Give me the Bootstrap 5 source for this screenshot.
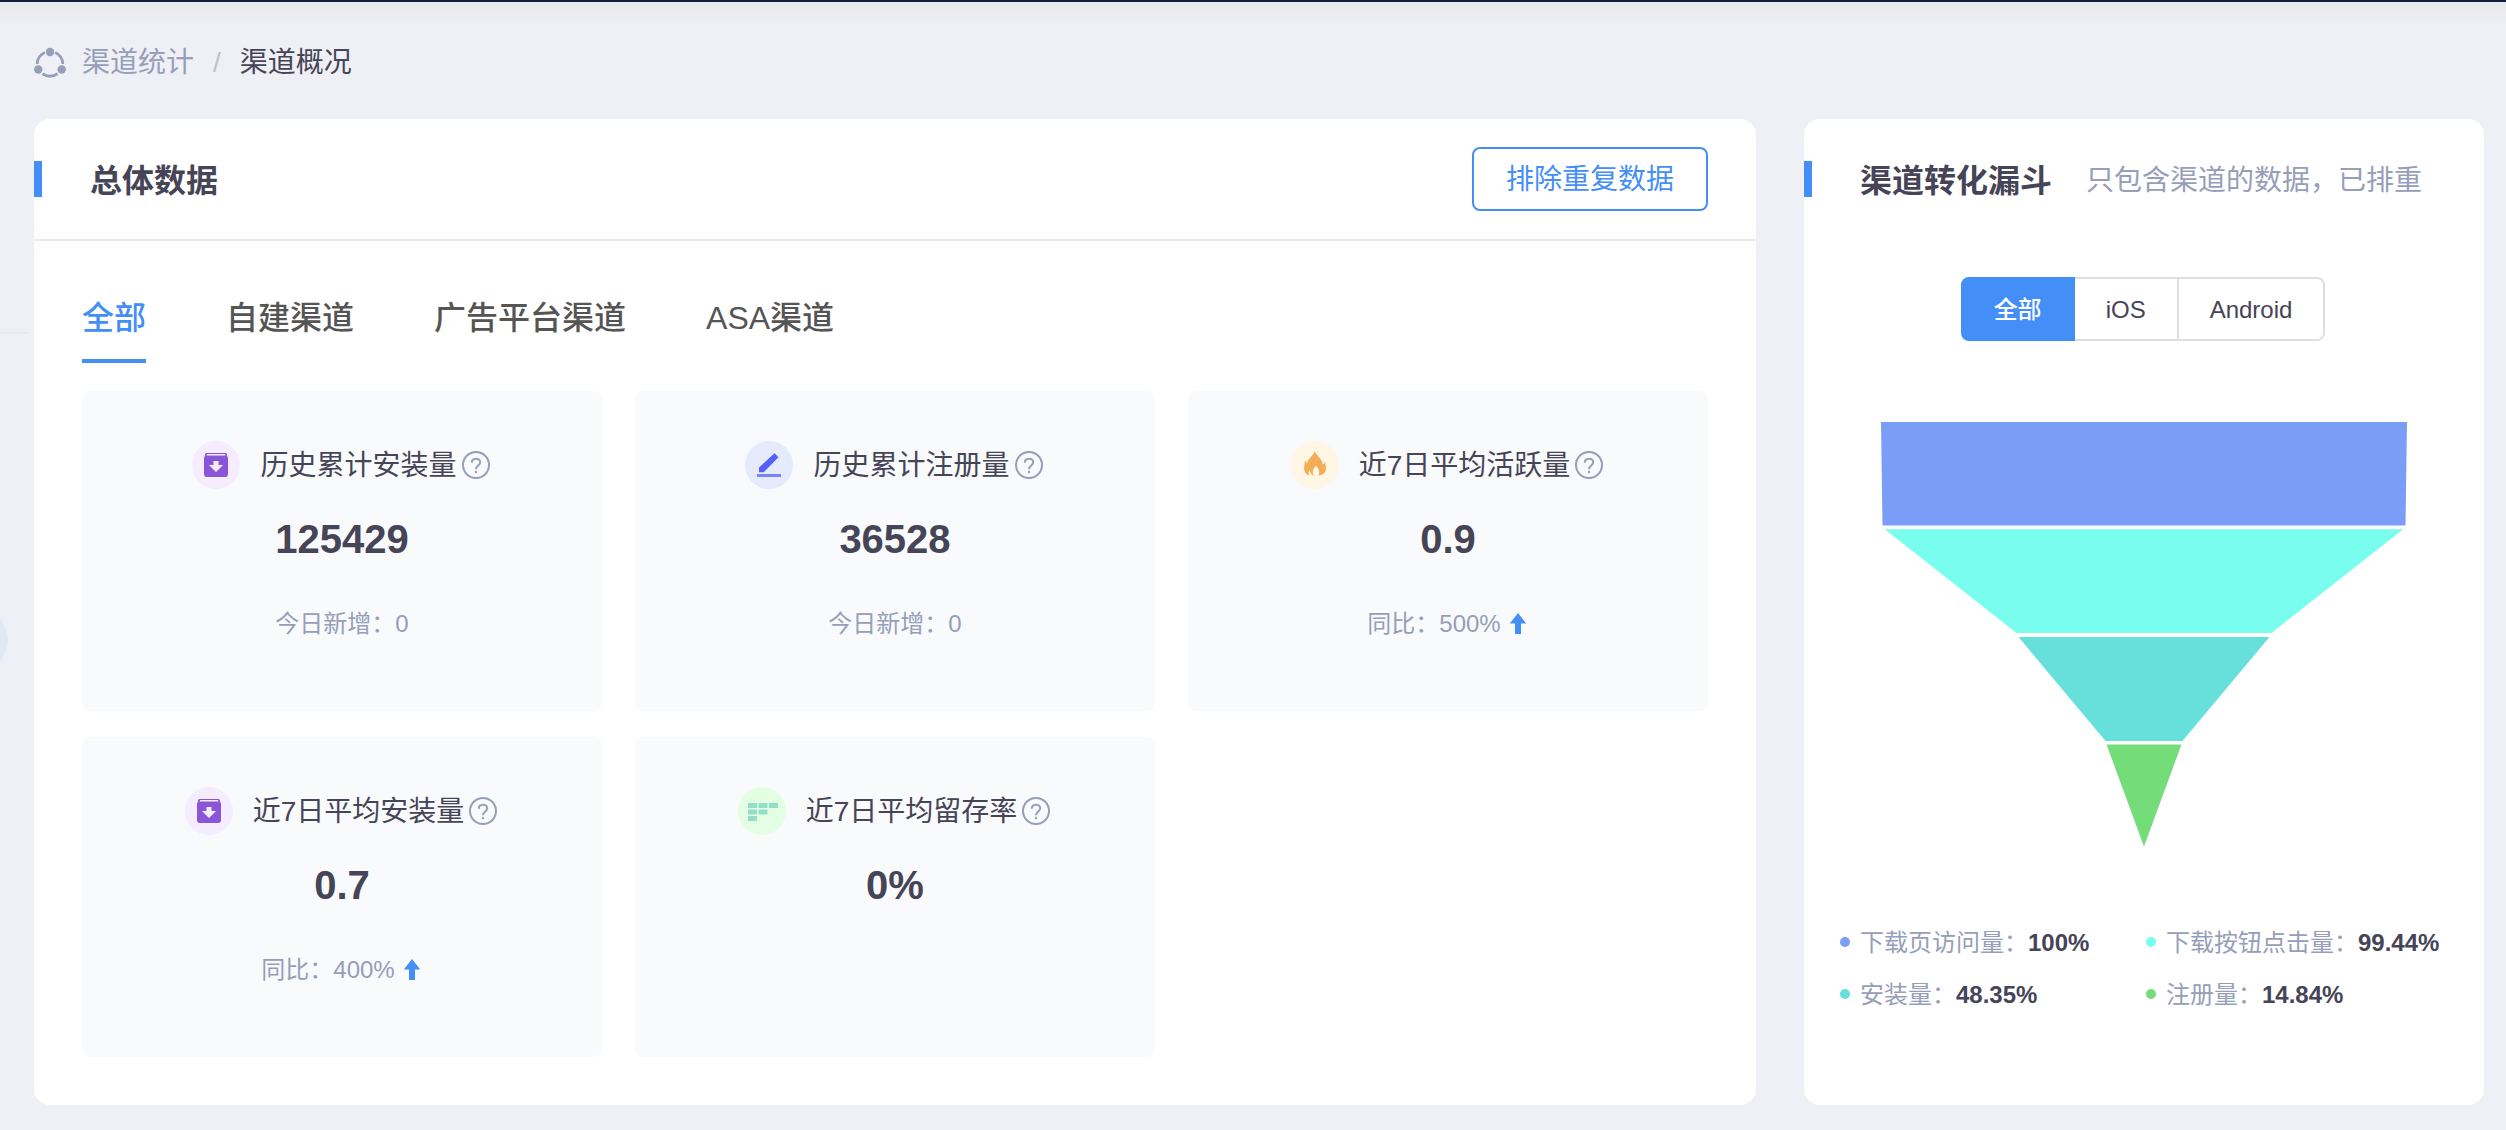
<!DOCTYPE html>
<html lang="zh-CN">
<head>
<meta charset="utf-8">
<meta name="viewport" content="width=device-width, initial-scale=1">
<title>渠道概况</title>
<link href="https://cdn.jsdelivr.net/npm/bootstrap@5.3.0/dist/css/bootstrap.min.css" rel="stylesheet">
<style>
  :root { --ink: #464457; --muted: #969eb9; --accent: #448ef7; }
  body {
    font-family: "Liberation Sans", "Noto Sans CJK SC", sans-serif;
    color: var(--ink); background: #eff0f5; font-size: 24px; line-height: 36px; overflow-x: hidden;
  }
  .topline { height: 2px; background: #151b3d; }
  .page { padding: 0 22px 24px 34px; background: linear-gradient(#e6e8ea, #eff0f5 24px); }
  .crumbs { height: 117px; padding-top: 4px; font-size: 28px; line-height: 40px; }
  .crumbs a { color: var(--muted); }
  .crumbs .sep { color: #c0c2cb; margin: 0 19px; }
  .rail-line { top: 332px; left: 0; width: 30px; height: 2px; background: #e9e9ee; }
  .rail-handle { top: 608px; left: 0; width: 8px; height: 64px; overflow: hidden; }
  .rail-handle::before { content: ""; display: block; width: 64px; height: 64px; margin-left: -56px; border-radius: 50%; background: #e0e7f5; }
  .panels { display: grid; grid-template-columns: minmax(0, 1fr) 680px; gap: 48px; }
  .panel { background: #fff; border-radius: 16px; }
  .panel-head { height: 120px; padding-right: 48px; }
  .panel-head.ruled { height: 122px; border-bottom: 2px solid #e9e9ef; }
  .panel-head::before { content: ""; width: 8px; height: 36px; background: var(--accent); margin-right: 48px; flex: none; }
  .panel-head h2 { font-size: 32px; line-height: 48px; font-weight: 700; padding-top: 3px; }
  .hint { font-size: 28px; line-height: 40px; color: var(--muted); margin-left: 34px; padding-top: 3px; white-space: nowrap; }
  .btn-dedupe { --bs-btn-color: var(--accent); --bs-btn-border-color: var(--accent); --bs-btn-hover-bg: var(--accent); --bs-btn-hover-color: #fff;
    border-width: 2px; border-radius: 8px; padding: 11px 32px 9px; font-size: 28px; line-height: 40px; }
  .panel-body { padding: 52px 48px 48px; }
  .tabs { gap: 80px; margin-bottom: 28px; }
  .tabs .tab { border: 0; border-bottom: 4px solid transparent; background: none; color: #555; padding: 0 0 16px; font-size: 32px; line-height: 50px; font-weight: 500; }
  .tabs .tab.active { color: var(--accent); border-color: var(--accent); }
  .tiles { display: grid; grid-template-columns: repeat(3, minmax(0, 1fr)); gap: 26px 33px; }
  .tile { background: #f8fafc; border-radius: 8px; min-height: 320px; padding-top: 50px; text-align: center; }
  .tile-title { font-size: 28px; line-height: 46px; font-weight: 400; margin: 0; padding-top: 2px; }
  .disc { width: 48px; height: 48px; border-radius: 50%; margin-right: 20px; }
  .disc svg { display: block; }
  .help { border: 0; background: none; padding: 0; margin: 0 2px 0 5px; line-height: 0; color: var(--muted); }
  .figure-num { font-size: 40px; line-height: 48px; font-weight: 700; margin-top: 26px; }
  .figure-sub { color: var(--muted); margin-top: 43px; }
  .arrow { margin: 0 2px 0 8px; }
  .platforms { margin-top: 38px; }
  .platforms .btn { --bs-btn-color: var(--ink); --bs-btn-border-color: #dedee5; --bs-btn-active-bg: var(--accent); --bs-btn-active-border-color: var(--accent); --bs-btn-active-color: #fff;
    border-width: 2px; border-radius: 8px; padding: 13px 31px 11px; font-size: 24px; line-height: 36px; font-weight: 500; }
  .btn-group.platforms > .btn:not(:first-child) { margin-left: -2px; }
  .funnel { display: block; width: 100%; max-width: 526px; margin: 81px auto 0; }
  .legend { display: grid; grid-template-columns: 1fr 1fr; row-gap: 16px; padding: 0 32px 0 36px; margin: 78px 0 0; }
  .legend .item { display: flex; align-items: center; white-space: nowrap; }
  .legend .dot { width: 10px; height: 10px; border-radius: 50%; margin-right: 10px; }
  .legend dt, .legend dd { padding-top: 2px; }
  .legend dt { font-weight: 400; color: var(--muted); }
  .legend dd { font-weight: 700; margin: 0; }
  .c1 { background: #7a9df8; } .c2 { background: #78fdee; } .c3 { background: #67e0dc; } .c4 { background: #74dc78; }
  .legend .item { height: 36px; }
  @media (max-width: 1800px) { .panels { grid-template-columns: minmax(0, 1fr); } }
</style>
</head>
<body class="position-relative">
<svg width="0" height="0" class="position-absolute" aria-hidden="true">
  <symbol id="i-help" viewBox="0 0 28 28">
    <circle cx="14" cy="14" r="13" fill="none" stroke="currentColor" stroke-width="2"/>
    <path d="M9.800 11.800C9.800 6.400 18.200 6.400 18.200 11.300C18.200 14.300 14 14.600 14 18.200" fill="none" stroke="currentColor" stroke-width="2"/>
    <circle cx="14" cy="21" r="1.200" fill="currentColor"/>
  </symbol>
  <symbol id="i-install" viewBox="0 0 48 48">
    <path d="M14.500 12h19q1 0 1.300 1l.4 2H12.800l.4-2q.3-1 1.300-1z" fill="#8a55d6"/><path d="M15.200 13h17.600l.8 1.600H14.400z" fill="#f5edff"/>
    <path d="M12 16.500q0-1.500 1.500-1.500h21q1.500 0 1.500 1.500V33q0 3-3 3H15q-3 0-3-3z" fill="#8a55d6"/>
    <path d="M21.500 20h5v4H31L24 31l-7-7h4.500z" fill="#f5edff"/>
  </symbol>
  <symbol id="i-up" viewBox="0 0 18 22">
    <path d="M9 0l8.200 10.500H12V21H6V10.500H.8z" fill="#448ef7"/>
  </symbol>
</svg>
<div class="topline"></div>
<div class="rail-line position-absolute"></div>
<div class="rail-handle position-absolute"></div>
<div class="page">
  <nav class="crumbs d-flex align-items-center" aria-label="breadcrumb">
    <svg width="32" height="32" viewBox="0 0 32 32" aria-hidden="true" class="me-3">
      <g fill="none" stroke="#969eb9" stroke-width="2.800"><path d="M3.200 17A13 13 0 0 1 10.800 5.600"/><path d="M21.200 5.600A13 13 0 0 1 28.800 17"/><path d="M8.400 26.800A14 14 0 0 0 23.600 26.800"/></g>
      <g fill="#969eb9"><circle cx="16" cy="5" r="4.200"/><circle cx="4.300" cy="22.500" r="4.200"/><circle cx="27.700" cy="22.500" r="4.200"/></g>
    </svg>
    <a href="#" class="text-decoration-none">渠道统计</a><span class="sep">/</span><span aria-current="page">渠道概况</span>
  </nav>
  <main class="panels">
    <section class="panel">
      <div class="panel-head ruled d-flex align-items-center">
        <h2 class="m-0">总体数据</h2>
        <button type="button" class="btn btn-dedupe ms-auto">排除重复数据</button>
      </div>
      <div class="panel-body">
        <div class="tabs d-flex" role="tablist">
          <button type="button" role="tab" aria-selected="true" class="tab active">全部</button>
          <button type="button" role="tab" aria-selected="false" class="tab">自建渠道</button>
          <button type="button" role="tab" aria-selected="false" class="tab">广告平台渠道</button>
          <button type="button" role="tab" aria-selected="false" class="tab">ASA渠道</button>
        </div>
        <div class="tiles">
          <article class="tile">
            <div class="d-flex justify-content-center align-items-center">
              <span class="disc" style="background:#f5edff"><svg width="48" height="48"><use href="#i-install"/></svg></span>
              <h3 class="tile-title">历史累计安装量</h3>
              <button type="button" class="help" aria-label="说明"><svg width="28" height="28"><use href="#i-help"/></svg></button>
            </div>
            <div class="figure-num">125429</div>
            <div class="figure-sub">今日新增：0</div>
          </article>
          <article class="tile">
            <div class="d-flex justify-content-center align-items-center">
              <span class="disc" style="background:#e5eafd"><svg width="48" height="48" viewBox="0 0 48 48"><path d="M12 33h24v3H12z" fill="#7784fa"/><path d="M29.500 12.300l4 4-14.800 14.900H14v-4.700z" fill="#5560f7"/></svg></span>
              <h3 class="tile-title">历史累计注册量</h3>
              <button type="button" class="help" aria-label="说明"><svg width="28" height="28"><use href="#i-help"/></svg></button>
            </div>
            <div class="figure-num">36528</div>
            <div class="figure-sub">今日新增：0</div>
          </article>
          <article class="tile">
            <div class="d-flex justify-content-center align-items-center">
              <span class="disc" style="background:#fff6e5"><svg width="48" height="48" viewBox="0 0 48 48"><path d="M23.800 10c.6 3.400 7.600 7.800 8 13.700 1-.6 1.700-1.400 1.900-3.200 1.200 3 1.600 6 1 9-.7 2.800-3.600 4.800-7.200 5.100 1.700-3.600.4-7-2.500-9.500-3 2.200-4.200 5.700-2.200 9.500-1.600-.4-3.400-1.500-4-5.600-1.400 1.500-1.500 3.400-.6 5.400-2.900-.7-5.200-3-5.100-7.300 0-2.400 1-4.200.4-7 1 .4 2 1.300 2.500 2.500.6-5 6.300-7.400 7.800-12.600z" fill="#f3ad57"/></svg></span>
              <h3 class="tile-title">近7日平均活跃量</h3>
              <button type="button" class="help" aria-label="说明"><svg width="28" height="28"><use href="#i-help"/></svg></button>
            </div>
            <div class="figure-num">0.9</div>
            <div class="figure-sub d-flex justify-content-center align-items-center">同比：500%<svg class="arrow" width="18" height="22"><use href="#i-up"/></svg></div>
          </article>
          <article class="tile">
            <div class="d-flex justify-content-center align-items-center">
              <span class="disc" style="background:#f5edff"><svg width="48" height="48"><use href="#i-install"/></svg></span>
              <h3 class="tile-title">近7日平均安装量</h3>
              <button type="button" class="help" aria-label="说明"><svg width="28" height="28"><use href="#i-help"/></svg></button>
            </div>
            <div class="figure-num">0.7</div>
            <div class="figure-sub d-flex justify-content-center align-items-center">同比：400%<svg class="arrow" width="18" height="22"><use href="#i-up"/></svg></div>
          </article>
          <article class="tile">
            <div class="d-flex justify-content-center align-items-center">
              <span class="disc" style="background:#e4fee4"><svg width="48" height="48" viewBox="0 0 48 48"><path d="M10 16h9v5h-9zM20.500 16h9v5h-9zM31 16h9v5h-9zM10 22.500h9v5h-9zM20.500 22.500h9v5h-9zM10 29h9v5h-9z" fill="#92dfc8"/></svg></span>
              <h3 class="tile-title">近7日平均留存率</h3>
              <button type="button" class="help" aria-label="说明"><svg width="28" height="28"><use href="#i-help"/></svg></button>
            </div>
            <div class="figure-num">0%</div>
          </article>
        </div>
      </div>
    </section>
    <section class="panel">
      <div class="panel-head d-flex align-items-center">
        <h2 class="m-0 text-nowrap">渠道转化漏斗</h2>
        <span class="hint">只包含渠道的数据，已排重</span>
      </div>
      <div class="text-center">
        <div class="btn-group platforms" role="group" aria-label="平台">
          <input type="radio" class="btn-check" name="platform" id="p-all" checked><label class="btn" for="p-all">全部</label>
          <input type="radio" class="btn-check" name="platform" id="p-ios"><label class="btn" for="p-ios">iOS</label>
          <input type="radio" class="btn-check" name="platform" id="p-android"><label class="btn" for="p-android">Android</label>
        </div>
      </div>
      <svg class="funnel" viewBox="0 0 526 424" role="img" aria-label="渠道转化漏斗">
        <path d="M0 0H526L524.500 103.500H1.500z" fill="#7a9df8"/>
        <path d="M3.800 107.300H522.200L390.500 211H135.500z" fill="#78fdee"/>
        <path d="M137.500 215H388.500L301.500 319H224.500z" fill="#67e0dc"/>
        <path d="M225.500 322.400H300.500L263 424.500z" fill="#74dc78"/>
      </svg>
      <dl class="legend">
        <div class="item"><span class="dot c1"></span><dt>下载页访问量：</dt><dd>100%</dd></div>
        <div class="item"><span class="dot c2"></span><dt>下载按钮点击量：</dt><dd>99.44%</dd></div>
        <div class="item"><span class="dot c3"></span><dt>安装量：</dt><dd>48.35%</dd></div>
        <div class="item"><span class="dot c4"></span><dt>注册量：</dt><dd>14.84%</dd></div>
      </dl>
    </section>
  </main>
</div>
<script src="https://cdn.jsdelivr.net/npm/bootstrap@5.3.0/dist/js/bootstrap.bundle.min.js"></script>
</body>
</html>
